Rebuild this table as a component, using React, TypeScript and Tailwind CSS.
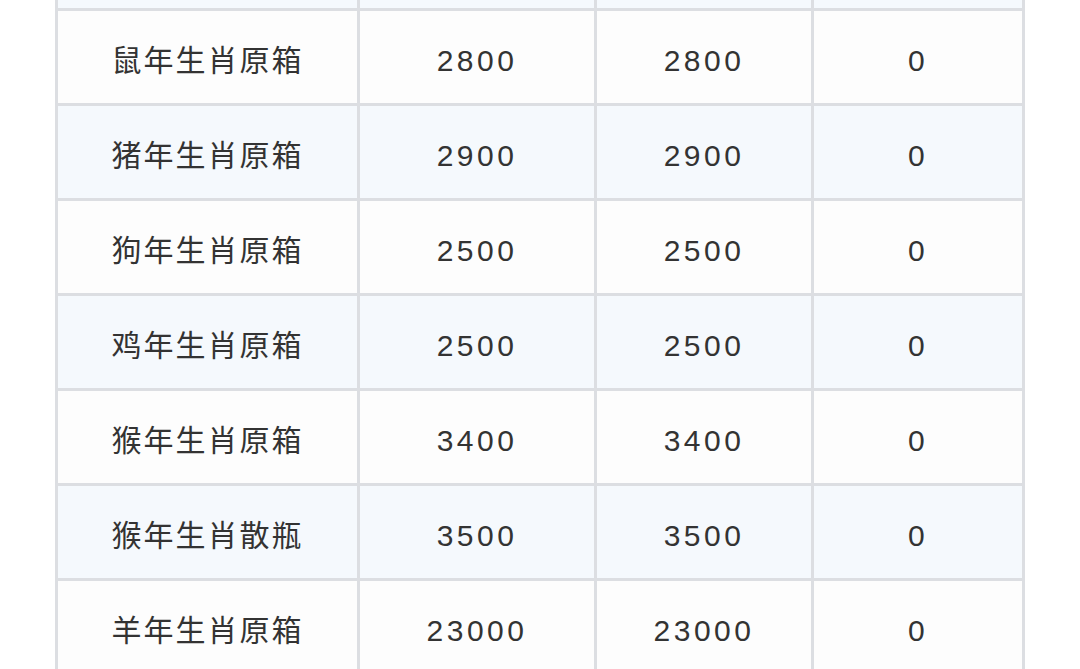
import React from "react";

const rows: [string, string, string, string][] = [
  ["鼠年生肖原箱", "2800", "2800", "0"],
  ["猪年生肖原箱", "2900", "2900", "0"],
  ["狗年生肖原箱", "2500", "2500", "0"],
  ["鸡年生肖原箱", "2500", "2500", "0"],
  ["猴年生肖原箱", "3400", "3400", "0"],
  ["猴年生肖散瓶", "3500", "3500", "0"],
  ["羊年生肖原箱", "23000", "23000", "0"],
];

export default function App() {
  return (
    <div
      className="w-[1080px] h-[669px] overflow-hidden bg-white"
      style={{ fontFamily: '"Liberation Sans", "Noto Sans CJK SC", sans-serif' }}
    >
      <div className="ml-[55px] w-[970px] bg-[#dcdee2] px-[3px] grid grid-cols-[299px_234px_214px_208px] gap-x-[3px] gap-y-[3px]">
        <div className="h-[8px] bg-[#f5f9fd]" />
        <div className="h-[8px] bg-[#f5f9fd]" />
        <div className="h-[8px] bg-[#f5f9fd]" />
        <div className="h-[8px] bg-[#f5f9fd]" />
        {rows.map((r, i) => {
          const bg = i % 2 === 0 ? "bg-[#fdfdfd]" : "bg-[#f5f9fd]";
          return (
            <React.Fragment key={i}>
              {r.map((c, j) => (
                <div
                  key={j}
                  className={`h-[92px] ${bg} flex items-center justify-center pt-[8px] text-[30px] text-[#333333] leading-none ${
                    j === 0 ? "tracking-[2px]" : "tracking-[3.5px]"
                  }`}
                >
                  {c}
                </div>
              ))}
            </React.Fragment>
          );
        })}
      </div>
    </div>
  );
}
